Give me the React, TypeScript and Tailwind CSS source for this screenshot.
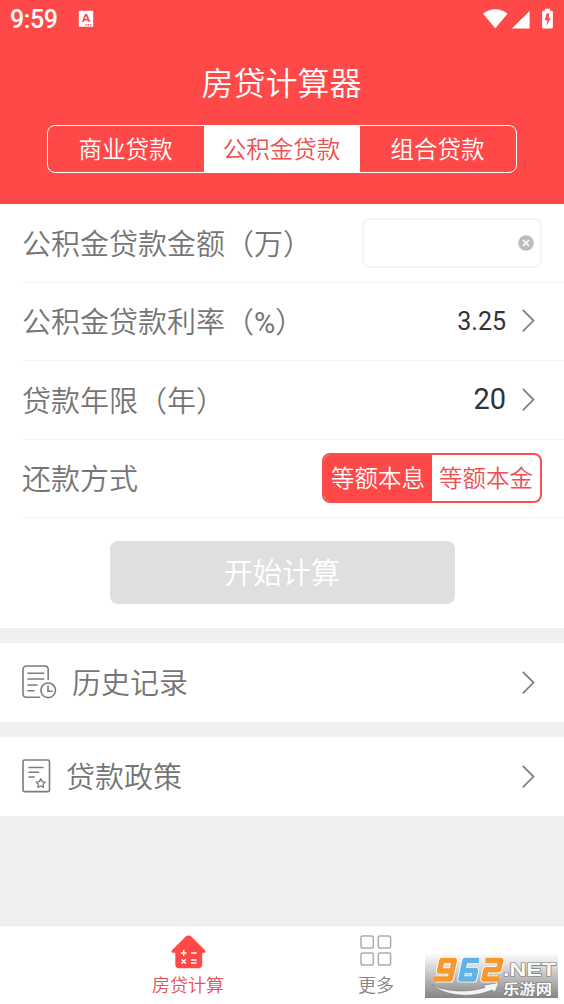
import { useState } from 'react';
import type { ReactNode } from 'react';

const LOAN_TYPES = ['商业贷款', '公积金贷款', '组合贷款'];
const REPAY_METHODS = ['等额本息', '等额本金'];

function Chevron() {
  return (
    <svg width="14" height="26" viewBox="0 0 14 26" fill="none" className="shrink-0">
      <path d="M0.800 1.900 11.500 12.600 0.800 23.300" stroke="#7c7c7c" strokeWidth="1.700" />
    </svg>
  );
}

function StatusBar() {
  return (
    <div className="flex h-[38px] items-center pl-[10px] pr-[10px]">
      <span className="w-[68px] pt-px font-[Roboto] text-[25px] font-medium leading-none tracking-[-0.4px]">9:59</span>
      <svg width="16" height="18" viewBox="0 0 16 18" className="-mt-px">
        <rect x="0.8" y="0.8" width="14.4" height="16" rx="1" fill="#fff" />
        <path d="M4.8 12 7.6 4.8h1L11.400 12M5.700 9.700h4.800" fill="none" stroke="#ff4949" strokeWidth="1.7" />
        <path d="M7.500 14.900h6" stroke="#ff4949" strokeWidth="1.300" strokeDasharray="1.400 0.800" />
      </svg>
      <svg width="71" height="22" viewBox="0 0 71 22" fill="#fff" className="-mt-px ml-auto">
        <path d="M0.100 5.800C6.800-.2 17.800-.2 24.500 5.800L12.300 20.300z" />
        <path d="M46.600 3v17.500H28.900z" />
        <path d="M61.900.8h5.200v1.900h1.500c.8 0 1.300.5 1.300 1.200v15.300c0 .7-.5 1.200-1.300 1.200h-8.200c-.8 0-1.300-.5-1.300-1.200V3.900c0-.7.5-1.200 1.300-1.200h1.500z" />
        <path d="M63.500 5.600h2.900l-.9 4.300h2.100l-4.200 8.100 1-5.800h-2.500z" fill="#ff4949" />
      </svg>
    </div>
  );
}

function FormRow({ label, children }: { label: ReactNode; children: ReactNode }) {
  return (
    <div className="ml-[22px] flex h-[78.5px] items-center justify-between border-b border-[#f4f4f4] pr-[22px]">
      <span className="whitespace-nowrap pb-px text-[29px] leading-none">{label}</span>
      {children}
    </div>
  );
}

function HistoryIcon() {
  return (
    <svg width="35" height="34" viewBox="0 0 35 34" fill="none" stroke="#7c7c7c" strokeWidth="1.600" strokeLinecap="round" className="-mt-[2px]">
      <path d="M17.500 32.300H4.500C2.400 32.300 1 31 1 29V4.500C1 2.400 2.400 1 4.500 1h18.200c2.100 0 3.500 1.400 3.500 3.500v9.800" />
      <path d="M6 8.200h15.800M6 14h15.800M6 20h9M6 25.800h6" />
      <circle cx="26.200" cy="25.300" r="7.300" />
      <path d="M26 21v5.200h4" />
    </svg>
  );
}

function PolicyIcon() {
  return (
    <svg width="29" height="34" viewBox="0 0 29 34" fill="none" stroke="#7c7c7c" strokeWidth="1.600" strokeLinecap="round" strokeLinejoin="round" className="-mt-[2px]">
      <rect x="1" y="1" width="26.500" height="31.600" rx="1.500" />
      <path d="M7 8.500h14M7 13.300h9.500M7 18h5" />
      <path d="m18.700 19.800 1.400 2.800 3.100.5-2.200 2.200.5 3.100-2.800-1.400-2.800 1.400.5-3.100-2.200-2.200 3.100-.5z" strokeWidth="1.300" />
    </svg>
  );
}

function HomeCalcIcon() {
  return (
    <svg width="35" height="34" viewBox="0 0 35 34" fill="#ff4949">
      <path d="M15 1.200c1.400-1.100 3.600-1.100 5 0L33.800 15c1.300 1.300.8 2.800-1 2.800h-1.600V29.500c0 2.300-1.400 3.700-3.700 3.700H8c-2.300 0-3.700-1.400-3.700-3.700V17.800H2.200c-1.800 0-2.300-1.500-1-2.800z" />
      <path d="M9.800 18h5.800M12.700 15.100v5.800M20 18h5.600M10.500 24.200l4.400 4.400M14.900 24.200l-4.400 4.400M20 25h5.600M20 28h5.600" stroke="#fff" strokeWidth="1.400" />
    </svg>
  );
}

function MoreIcon() {
  return (
    <svg width="32" height="32" viewBox="0 0 32 32" fill="none" stroke="#adadad" strokeWidth="1.500">
      <rect x="1" y="1" width="12.300" height="12" rx="1.800" />
      <rect x="18.300" y="1" width="12.300" height="12" rx="1.800" />
      <rect x="1" y="18" width="12.300" height="12" rx="1.800" />
      <rect x="18.300" y="18" width="12.300" height="12" rx="1.800" />
    </svg>
  );
}

function Watermark() {
  return (
    <svg width="133" height="45" viewBox="0 0 133 45" className="absolute bottom-[6px] right-[6px]">
      <defs>
        <linearGradient id="mark" x1="0" y1="0" x2="0" y2="1">
          <stop offset="0" stopColor="#fff" />
          <stop offset="1" stopColor="#858585" />
        </linearGradient>
      </defs>
      <rect width="133" height="45" fill="url(#mark)" />
      <path d="M6.500 31.500C20 39 43 40 60 34.500l-1.500-2.200L74 29.500l-4 9.500-3-2C46 46 20 43 6.500 31.500z" fill="#f4f4f4" stroke="#777" strokeWidth="0.600" />
      <g fill="none" strokeLinejoin="round">
        <g stroke="#fff" strokeWidth="7.200">
          <path d="M27 18H14.500L16.800 7.500H29.300L25.200 26H10" />
          <path d="M53 7.500H40L35.900 26H48.700L50.500 17.500H38" />
          <path d="M61.500 7.500H75.800L73.500 16.800H61L58.900 26H73" />
        </g>
        <g strokeWidth="5.500">
          <path d="M27 18H14.500L16.800 7.500H29.300L25.200 26H9" stroke="#f7982f" />
          <path d="M54 7.500H40L35.900 26H48.700L50.500 17.500H38" stroke="#5fb2e3" />
          <path d="M60.500 7.500H75.800L73.500 16.800H61L58.900 26H74" stroke="#f7982f" />
        </g>
      </g>
      <g fill="#fafafa" stroke="#7a7a7a" strokeWidth="1.200" paintOrder="stroke" fontWeight="700">
        <text x="78" y="23" fontSize="18" textLength="53" lengthAdjust="spacingAndGlyphs" fontFamily="Liberation Sans, sans-serif">.NET</text>
        <text x="78" y="41" fontSize="14" textLength="49" lengthAdjust="spacingAndGlyphs" fontFamily="Noto Sans CJK SC, sans-serif">乐游网</text>
      </g>
    </svg>
  );
}

export default function App() {
  const [loanType, setLoanType] = useState(1);
  const [method, setMethod] = useState(0);
  const [amount, setAmount] = useState('');

  return (
    <div lang="zh-CN" className="relative flex h-[1004px] w-[564px] flex-col overflow-hidden bg-[#f0f0f0] font-['Noto_Sans_CJK_SC',sans-serif] font-[350] text-[#757575] [text-spacing-trim:space-all]">
      <header className="h-[204px] shrink-0 bg-[#ff4949] text-white">
        <StatusBar />
        <h1 className="mt-[27px] pr-px text-center text-[32px] leading-8">房贷计算器</h1>
        <div className="mx-auto mt-[28px] flex h-[48px] w-[470px] overflow-hidden rounded-lg border-[1.500px] border-white">
          {LOAN_TYPES.map((name, i) => (
            <button
              key={name}
              onClick={() => setLoanType(i)}
              className={`flex-1 pr-px text-[23.500px] leading-none ${i === loanType ? 'bg-white text-[#ec5050]' : 'text-white'}`}
            >
              {name}
            </button>
          ))}
        </div>
      </header>

      <section className="h-[424px] shrink-0 bg-white">
        <FormRow label="公积金贷款金额（万）">
          <div className="flex h-[50px] w-[180px] items-center rounded-lg border-2 border-[#f5f5f5] pr-[6px]">
            <input value={amount} onChange={(e) => setAmount(e.target.value)} className="h-full min-w-0 flex-1 px-2 text-2xl outline-none" />
            <svg width="16" height="16" viewBox="0 0 16 16" onClick={() => setAmount('')}>
              <circle cx="8" cy="8" r="7.800" fill="#bdbdbd" />
              <path d="m5 5 6 6M11 5l-6 6" stroke="#fff" strokeWidth="1.500" />
            </svg>
          </div>
        </FormRow>
        <FormRow label={<>公积金贷款利率（<span className="font-[Roboto] font-normal leading-[0]">%</span>）</>}>
          <div className="flex items-center gap-[16px] pr-[6px] font-[Roboto] text-[25px] font-normal text-[#333]">
            3.25
            <Chevron />
          </div>
        </FormRow>
        <FormRow label="贷款年限（年）">
          <div className="flex items-center gap-[16px] pr-[6px] font-[Roboto] text-[29px] font-normal text-[#333]">
            20
            <Chevron />
          </div>
        </FormRow>
        <FormRow label="还款方式">
          <div className="flex h-[50px] w-[220px] overflow-hidden rounded-lg border-2 border-[#f75050]">
            {REPAY_METHODS.map((name, i) => (
              <button
                key={name}
                onClick={() => setMethod(i)}
                className={`flex-1 whitespace-nowrap pb-px text-[23.500px] leading-none ${i === method ? 'bg-[#ff4949] text-white' : 'text-[#ec5050]'}`}
              >
                {name}
              </button>
            ))}
          </div>
        </FormRow>
        <button className="mx-auto mt-[23px] block h-[63px] w-[345px] rounded-lg bg-[#dfdfdf] pb-[2px] text-[29px] leading-none text-white">开始计算</button>
      </section>

      <div className="mt-[15px] flex h-[79px] shrink-0 items-center bg-white pl-[22px] pr-[28px] text-[29px] leading-none">
        <HistoryIcon />
        <span className="-mt-[2px] ml-[15px] mr-auto">历史记录</span>
        <Chevron />
      </div>
      <div className="mt-[15px] flex h-[79px] shrink-0 items-center bg-white pl-[22px] pr-[28px] text-[29px] leading-none">
        <PolicyIcon />
        <span className="-mt-[2px] ml-[15px] mr-auto">贷款政策</span>
        <Chevron />
      </div>

      <nav className="mt-auto flex h-[79px] shrink-0 border-t border-[#e8e8e8] bg-white px-[94px] text-[18px] leading-none">
        <div className="flex flex-1 flex-col items-center pt-[9px] text-[#e85050]">
          <HomeCalcIcon />
          <span className="mt-[6px]">房贷计算</span>
        </div>
        <div className="flex flex-1 flex-col items-center pt-[9px] text-[#858585]">
          <MoreIcon />
          <span className="mt-[8px]">更多</span>
        </div>
      </nav>
      <Watermark />
    </div>
  );
}
